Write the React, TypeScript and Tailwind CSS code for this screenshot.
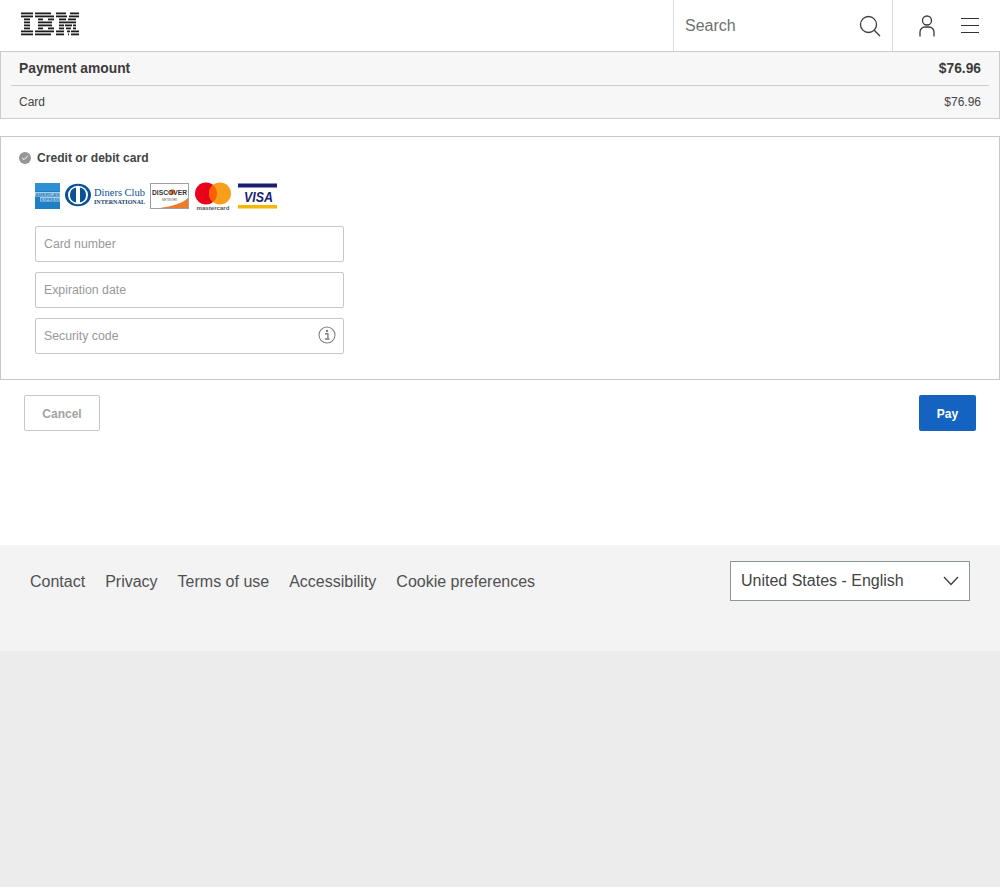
import { Check } from "lucide-react";

type FieldProps = {
  label: string;
  children?: React.ReactNode;
};

function IbmLogo() {
  // eight stripes, each row is a list of [x, width] pieces
  const rows: number[][][] = [
    [[0, 12], [14, 16], [35, 10], [49, 9]],
    [[0, 12], [14, 19], [35, 11], [48, 10]],
    [[3, 6], [17, 5], [27, 6], [38, 7], [47, 8]],
    [[3, 6], [17, 14], [38, 17]],
    [[3, 6], [17, 14], [38, 5], [44, 7], [52, 3]],
    [[3, 6], [17, 5], [27, 6], [38, 5], [45, 5], [52, 3]],
    [[0, 12], [14, 19], [35, 8], [46, 3], [50, 8]],
    [[0, 12], [14, 16], [35, 8], [47, 1], [50, 8]],
  ];
  return (
    <svg width="58" height="24" viewBox="0 0 58 24" className="block">
      {rows.map((row, i) =>
        row.map(([x, w]) => (
          <rect key={`${i}-${x}`} x={x} y={i * 3 + 0.5} width={w} height="1.8" fill="#1c1c1c" />
        ))
      )}
    </svg>
  );
}

function SearchIcon() {
  return (
    <svg width="22" height="22" viewBox="0 0 22 22" fill="none" stroke="#3c3c3c" strokeWidth="1.3">
      <circle cx="9.5" cy="9.5" r="8" />
      <path d="M15.2 15.2 L21 21" />
    </svg>
  );
}

function UserIcon() {
  return (
    <svg width="18" height="22" viewBox="0 0 18 22" fill="none" stroke="#3c3c3c" strokeWidth="1.3">
      <circle cx="9" cy="5.5" r="4.5" />
      <path d="M2 21.5 V17 a5 5 0 0 1 5 -5 h4 a5 5 0 0 1 5 5 V21.5" />
    </svg>
  );
}

function MenuIcon() {
  return (
    <svg width="18" height="17" viewBox="0 0 18 17" fill="none" stroke="#333" strokeWidth="1.2">
      <path d="M0 1.5 H18 M0 8.5 H18 M0 15.5 H18" />
    </svg>
  );
}

function InfoIcon() {
  return (
    <svg width="18" height="18" viewBox="0 0 18 18" fill="none">
      <circle cx="9" cy="9" r="8" stroke="#808080" strokeWidth="1.1" />
      <circle cx="9" cy="5" r="1.2" fill="#808080" />
      <path d="M7 7.8 H9.9 V12.8 M6.8 13 H11.6" stroke="#808080" strokeWidth="1.4" />
    </svg>
  );
}

function ChevronIcon() {
  return (
    <svg width="16" height="10" viewBox="0 0 16 10" fill="none" stroke="#3c3c3c" strokeWidth="1.3">
      <path d="M1 1 L8 8.5 L15 1" />
    </svg>
  );
}

function AmexLogo() {
  return (
    <svg width="25" height="26" viewBox="0 0 25 26">
      <rect width="25" height="26" fill="#1f7fc4" />
      <rect y="0" width="25" height="8" fill="#2e90d2" />
      <rect x="0" y="9" width="25" height="4.5" fill="#a9cfe9" />
      <rect x="5" y="14" width="20" height="4.5" fill="#a9cfe9" />
      <text x="0.5" y="12.6" fontSize="3.6" fontWeight="700" fontFamily="'Liberation Sans', sans-serif" fill="#1f7fc4" textLength="24" lengthAdjust="spacingAndGlyphs">
        AMERICAN
      </text>
      <text x="5.5" y="17.6" fontSize="3.6" fontWeight="700" fontFamily="'Liberation Sans', sans-serif" fill="#1f7fc4" textLength="19" lengthAdjust="spacingAndGlyphs">
        EXPRESS
      </text>
    </svg>
  );
}

function DinersLogo() {
  return (
    <svg width="81" height="26" viewBox="0 0 81 26">
      <ellipse cx="13" cy="13" rx="13" ry="11.3" fill="#0a5296" />
      <ellipse cx="13" cy="13" rx="10" ry="9.3" fill="#fff" />
      <path d="M11 5.4 a7.8 7.8 0 0 0 0 15.2 Z M15 5.4 a7.8 7.8 0 0 1 0 15.2 Z" fill="#0a5296" />
      <text x="29" y="14" fontSize="11" fontFamily="'Liberation Serif', serif" fill="#0a5296" textLength="51" lengthAdjust="spacingAndGlyphs">
        Diners Club
      </text>
      <text x="29" y="21.8" fontSize="5.5" fontWeight="700" fontFamily="'Liberation Serif', serif" fill="#17406e" textLength="51" lengthAdjust="spacingAndGlyphs">
        INTERNATIONAL
      </text>
    </svg>
  );
}

function DiscoverLogo() {
  return (
    <svg width="39" height="26" viewBox="0 0 39 26">
      <rect x="0.5" y="0.5" width="38" height="25" fill="#fff" stroke="#a0a0a0" />
      <path d="M10 25 C22 23.5 33 20 38 15 V25 Z" fill="#f07a2c" />
      <circle cx="22.5" cy="9" r="2.8" fill="#f07a2c" />
      <text x="2" y="11.5" fontSize="7" fontWeight="700" fontFamily="'Liberation Sans', sans-serif" fill="#333" textLength="35" lengthAdjust="spacingAndGlyphs">
        DISCOVER
      </text>
      <text x="12" y="17.5" fontSize="3" fontFamily="'Liberation Sans', sans-serif" fill="#555">
        NETWORK
      </text>
    </svg>
  );
}

function MastercardLogo() {
  return (
    <svg width="36" height="29" viewBox="0 0 36 29">
      <circle cx="11" cy="11.5" r="11" fill="#eb001b" />
      <circle cx="25" cy="11.5" r="11" fill="#f79e1b" />
      <path d="M18 3 a11 11 0 0 1 0 17 a11 11 0 0 1 0 -17 Z" fill="#ff5f00" />
      <text x="1.5" y="28" fontSize="6.2" fontWeight="700" fontFamily="'Liberation Sans', sans-serif" fill="#555" textLength="33" lengthAdjust="spacingAndGlyphs">
        mastercard
      </text>
    </svg>
  );
}

function VisaLogo() {
  return (
    <svg width="39" height="26" viewBox="0 0 39 26">
      <rect y="0.5" width="39" height="4" fill="#1a1f71" />
      <rect y="22" width="39" height="3.5" fill="#f7b600" />
      <text x="6" y="18.5" fontSize="14" fontWeight="700" fontStyle="italic" fontFamily="'Liberation Sans', sans-serif" fill="#1a1f71" textLength="29" lengthAdjust="spacingAndGlyphs">
        VISA
      </text>
    </svg>
  );
}

function Field({ label, children }: FieldProps) {
  return (
    <div className="flex h-9 w-[309px] items-center justify-between rounded-[2px] border border-[#c7c7c7] pl-2 pr-[15px] text-[12.3px] text-[#999999]">
      <span className="pt-px">{label}</span>
      {children}
    </div>
  );
}

function FooterLink({ text }: { text: string }) {
  return <span className="text-base text-[#505050]">{text}</span>;
}

export default function App() {
  return (
    <div className="flex min-h-[887px] flex-col bg-[#ececec] font-['Liberation_Sans',Arial,sans-serif] text-[#323232]">
      <div className="bg-white">
        <header className="flex h-[51px] items-stretch justify-between">
          <div className="pl-[21px] pt-3">
            <IbmLogo />
          </div>
          <div className="flex">
            <div className="flex w-[220px] items-center justify-between border-x border-[#dcdcdc] px-[11px] text-base text-[#6f6f6f]">
              <span>Search</span>
              <SearchIcon />
            </div>
            <div className="flex w-[107px] items-center justify-between pl-[25px] pr-[21px]">
              <UserIcon />
              <MenuIcon />
            </div>
          </div>
        </header>

        <section className="h-[68px] border border-[#cccccc] bg-[#f7f7f7] px-[10px] pt-px">
          <div className="flex h-[33px] items-center justify-between border-b border-[#cccccc] px-2 text-[13.8px] font-bold text-[#3c3c3c]">
            <span>Payment amount</span>
            <span>$76.96</span>
          </div>
          <div className="flex h-[31px] items-center justify-between px-2 text-xs text-[#444444]">
            <span>Card</span>
            <span>$76.96</span>
          </div>
        </section>

        <section className="mt-[17px] h-[244px] border border-[#c7c7c7] px-[18px] pt-3">
          <div className="flex items-center gap-[6px] text-[12.1px] font-bold text-[#444444]">
            <span className="flex h-3 w-3 items-center justify-center rounded-full bg-[#969696]">
              <Check size={8} color="#fff" strokeWidth={3} />
            </span>
            <span>Credit or debit card</span>
          </div>
          <div className="ml-4 mt-4 flex h-[29px] items-start">
            <AmexLogo />
            <div className="ml-[5px] -mt-px">
              <DinersLogo />
            </div>
            <div className="ml-1">
              <DiscoverLogo />
            </div>
            <div className="ml-[6px] -mt-px">
              <MastercardLogo />
            </div>
            <div className="ml-[7px]">
              <VisaLogo />
            </div>
          </div>
          <div className="ml-4 mt-[14px] flex flex-col gap-[10px]">
            <Field label="Card number" />
            <Field label="Expiration date" />
            <Field label="Security code">
              <span className="-mr-[8px] -mt-[2px]">
                <InfoIcon />
              </span>
            </Field>
          </div>
        </section>

        <div className="flex h-[165px] items-start justify-between px-6 pt-[15px]">
          <button className="h-9 w-[76px] rounded-[2px] border border-[#c7c7c7] bg-white pt-px text-xs font-bold text-[#a3a3a3]">
            Cancel
          </button>
          <button className="h-9 w-[57px] rounded-[2px] bg-[#1563c1] pt-px text-xs font-bold text-white">
            Pay
          </button>
        </div>
      </div>

      <footer className="flex h-[106px] items-start justify-between bg-[#f3f3f3] px-[30px] pt-4">
        <div className="flex h-10 items-center gap-5 pt-px">
          <FooterLink text="Contact" />
          <FooterLink text="Privacy" />
          <FooterLink text="Terms of use" />
          <FooterLink text="Accessibility" />
          <FooterLink text="Cookie preferences" />
        </div>
        <div className="flex h-10 w-60 items-center justify-between border border-[#8c9696] bg-white pl-[10px] pr-[10px] text-base text-[#444444]">
          <span>United States - English</span>
          <ChevronIcon />
        </div>
      </footer>
    </div>
  );
}
